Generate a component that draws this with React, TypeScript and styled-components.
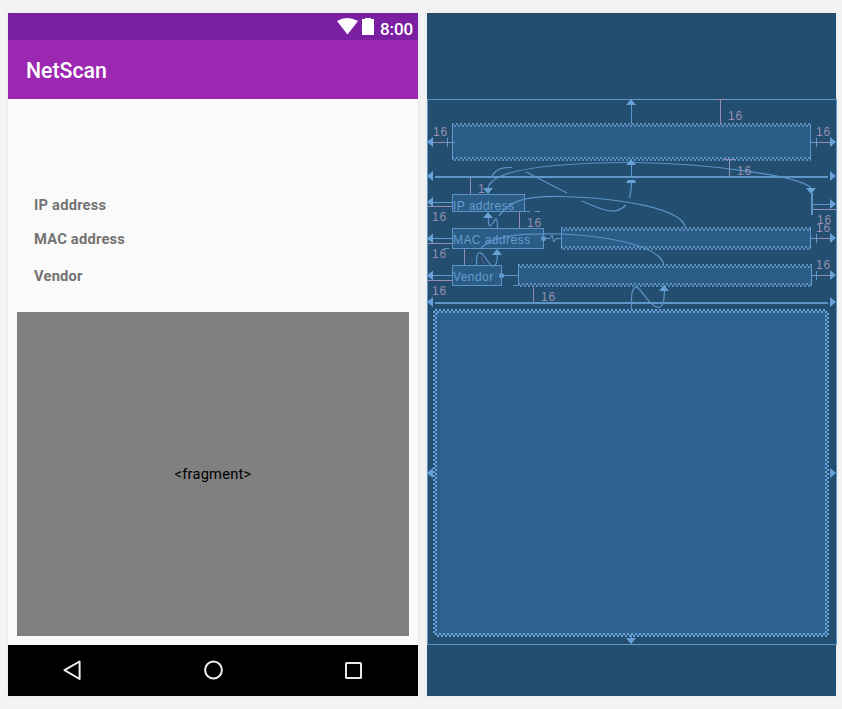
import React from "react";
import styled, { createGlobalStyle } from "styled-components";

const GlobalStyle = createGlobalStyle`
  * { box-sizing: border-box; }
  body { margin: 0; background: #f4f4f4; overflow: hidden; }
`;

const Workspace = styled.main`
  display: flex;
  gap: 9px;
  width: 842px;
  height: 709px;
  padding: 13px 0 0 8px;
  font-family: Roboto, sans-serif;
`;

const Device = styled.section`
  display: flex;
  flex-direction: column;
  width: 410px;
  height: 683px;
  background: #fafafa;
  box-shadow: 0 0 5px 1px #ebebeb;
`;

const StatusBar = styled.header`
  display: flex;
  justify-content: flex-end;
  height: 27px;
  padding: 5px 5px 0 0;
  background: #7b1fa2;
  color: #fff;
`;

const Clock = styled.time`
  width: 33px;
  margin-left: 6px;
  font-size: 17px;
  font-weight: 500;
  line-height: 22px;
  white-space: nowrap;
  letter-spacing: -0.1px;
`;

const Toolbar = styled.div`
  display: flex;
  align-items: center;
  height: 59px;
  padding: 2px 0 0 18px;
  background: #9c27b0;
  color: #fff;
`;

const Title = styled.h1`
  margin: 0;
  font-size: 21.3px;
  font-weight: 500;
`;

const Content = styled.div`
  display: flex;
  flex-direction: column;
  height: 546px;
  padding: 77px 9px 9px;
`;

const Details = styled.dl`
  display: flex;
  flex-direction: column;
  height: 127px;
  margin: 0 0 9px;
  padding: 17px 0 0 17px;
  border-top: 1px solid #f5f5f5;
  border-bottom: 1px solid #f5f5f5;
`;

const Field = styled.dt<{ $space: number }>`
  height: ${(p) => p.$space}px;
  color: #737373;
  font-size: 14.7px;
  font-weight: 700;
  line-height: 22px;
  letter-spacing: 0.22px;
`;

const Fragment = styled.div`
  display: flex;
  align-items: center;
  justify-content: center;
  height: 324px;
  background: #808080;
  color: #000;
  font-size: 14.7px;
  letter-spacing: 0.2px;
`;

const NavBar = styled.nav`
  display: flex;
  align-items: center;
  justify-content: space-between;
  height: 51px;
  padding: 0 55px 2px 54px;
  background: #000;
`;

const Blueprint = styled.section`
  position: relative;
  width: 409px;
  height: 683px;
  background: #234e6f;
  box-shadow: 0 0 5px 1px #ebebeb;
`;

const ScreenFrame = styled.div`
  position: absolute;
  top: 86px;
  left: 0;
  width: 410px;
  height: 546px;
  border: 1px solid #5f97ca;
`;

type Box = { x: number; y: number; w: number; h: number };

const Widget = styled.div<{ $box: Box; $fill: string; $outlined?: boolean }>`
  position: absolute;
  left: ${(p) => p.$box.x - 427}px;
  top: ${(p) => p.$box.y - 13}px;
  width: ${(p) => p.$box.w}px;
  height: ${(p) => p.$box.h}px;
  background: ${(p) => p.$fill};
  border: ${(p) => (p.$outlined ? "1px solid #5c94c8" : "0")};
  color: #669dce;
  font: 12px/22px "Liberation Sans", sans-serif;
  letter-spacing: 0.42px;
  white-space: nowrap;
`;

const Overlay = styled.svg`
  position: absolute;
  top: 0;
  left: 0;
  overflow: visible;
`;

const Margin = styled.span<{ $x: number; $y: number }>`
  position: absolute;
  left: ${(p) => p.$x - 427}px;
  top: ${(p) => p.$y - 10}px;
  color: #968eb0;
  font: 12px/8px "Liberation Sans", sans-serif;
  letter-spacing: 0.8px;
`;

const fixed = [
  { box: { x: 452, y: 194, w: 73, h: 18 }, label: "IP address" },
  { box: { x: 452, y: 228, w: 92, h: 21 }, label: "MAC address" },
  { box: { x: 452, y: 265, w: 50, h: 21 }, label: "Vendor" },
];

const stretched: Box[] = [
  { x: 452, y: 125, w: 359, h: 34 },
  { x: 561, y: 229, w: 250, h: 19 },
  { x: 518, y: 266, w: 294, h: 19 },
];

const fragmentBox: Box = { x: 435, y: 311, w: 392, h: 324 };

const margins: [string, number, number][] = [
  ["16", 433, 125], ["16", 816, 125], ["16", 728, 109], ["16", 737, 164],
  ["1", 478, 182], ["16", 432, 210], ["16", 527, 216], ["16", 817, 213],
  ["16", 816, 221], ["16", 432, 247], ["16", 816, 258], ["16", 432, 284],
  ["16", 541, 290],
];

type Dir = "left" | "right" | "up" | "down";
const heads: Record<Dir, string> = {
  left: "l6 -5v10z",
  right: "l-6 -5v10z",
  up: "l5 6h-10z",
  down: "l-5 -6h10z",
};

const arrows: [Dir, number, number][] = [
  ["left", 427, 142], ["left", 427, 176], ["left", 427, 202], ["left", 427, 238.5],
  ["left", 427, 275.5], ["left", 427, 302], ["left", 427, 473],
  ["right", 836, 142], ["right", 836, 176], ["right", 836, 204], ["right", 836, 238],
  ["right", 836, 275], ["right", 836, 302], ["right", 836, 473],
  ["up", 631, 99], ["up", 631, 159], ["up", 488, 212], ["up", 497, 249], ["up", 664, 285],
  ["down", 488, 194], ["down", 811, 194], ["down", 631, 644],
];

const links = [
  "M488 188C491 173 533 163 631 162.5C714 163 801 177 811 188",
  "M492 177C494 171 499 167 512 167.5M526 172L567 193M582 201C600 209 606 211 613 211C619 211 623 208 626 205M631.5 183C631.5 190 630.5 194 629.5 198",
  "M499 216C507 204 518 196 560 196.5C627 198 682 210 685 227",
  "M480 249C491 237 512 233 560 234C613 236 660 247 664 265",
  "M488.5 217C488 224 489 229 493 223C498 214 497 222 497.5 228",
  "M476.5 265C476 248 481 251 487 260C492 268 497 270 497.5 254",
  "M631.5 311V302C631 292 634 282 640 290C646 297 652 307 659 307.5C664 306 664 299 664.5 291",
];

const blueLines =
  "M433 202.5H452M433 238.5H452M433 275.5H452M447 142.5H455M811 142.5H817M811 238.5H817M812 275.5H817" +
  "M447.5 138V147M816.5 138V147M816.5 234V243M816.5 271V280M812 204.5H830" +
  "M631.5 105V124M631.5 165V176M631.5 635V638M544 238.5H550L552 235L554 242L556 238.5H561M502 275.5H518" +
  "M452.5 124V160M810.5 124V160M561.5 227V249M810.5 228V249M518.5 264V286M811.5 265V286" +
  "M525 211.5H530M535 211.5H540M513 285.5H518M444 248.5H449";

const marginLines =
  "M433 142.5H447M817 142.5H830M817 238.5H830M817 275.5H830M427 206.5H452M427 243.5H452M427 280.5H452M812 209.5H836" +
  "M720.5 99V125M715 99.5H726M729.5 160V176M724 159.5H735M470.5 178V194M519.5 212V228M464.5 249V265M533.5 286V302";

type WaveProps = { x: number; y: number; length: number; paint: string; vertical?: boolean };

function Wave({ x, y, length, paint, vertical }: WaveProps) {
  return (
    <rect
      transform={`translate(${x} ${y})`}
      width={vertical ? 4 : length}
      height={vertical ? length : 4}
      fill={`url(#${paint})`}
    />
  );
}

function WavePattern({ id, color }: { id: string; color: string }) {
  return (
    <pattern id={id} width="4" height="4" patternUnits="userSpaceOnUse">
      <path d="M0 0h2v2H0zM2 2h2v2H2z" fill={color} />
    </pattern>
  );
}

function Constraints() {
  return (
    <Overlay width="409" height="683" viewBox="427 13 409 683" aria-hidden="true">
      <defs>
        <WavePattern id="wave-soft" color="#5a8fc0" />
        <WavePattern id="wave-bright" color="#6ba5dc" />
      </defs>
      {stretched.map(({ x, y, w, h }) => (
        <g key={y}>
          <Wave x={x} y={y - 2} length={w} paint="wave-soft" />
          <Wave x={x} y={y + h - 2} length={w} paint="wave-soft" />
        </g>
      ))}
      <Wave x={435} y={309} length={392} paint="wave-bright" />
      <Wave x={435} y={633} length={392} paint="wave-bright" />
      <Wave x={433} y={311} length={324} paint="wave-bright" vertical />
      <Wave x={825} y={311} length={324} paint="wave-bright" vertical />
      <path d={marginLines} stroke="#968eb0" fill="none" />
      <path d={blueLines} stroke="#5f99cf" fill="none" />
      <path d="M435 177H828M435 303H828M812 193V215" stroke="#5f97ca" strokeWidth="2" />
      {links.map((d) => (
        <path key={d} d={d} stroke="#5c94c8" strokeWidth="1.25" fill="none" />
      ))}
      <path d="M628 180h7l1 3h-10z" fill="#67a1d8" />
      <path d="M472 259v2M482 256v4q0 3 3 3" stroke="#625f8c" fill="none" />
      <circle cx="543.5" cy="238.5" r="2.6" fill="#5c98d0" />
      <circle cx="501.5" cy="275.5" r="2.6" fill="#5c98d0" />
      {arrows.map(([dir, x, y]) => (
        <path key={`${dir}-${x}-${y}`} d={`M${x} ${y}${heads[dir]}`} fill="#67a1d8" />
      ))}
    </Overlay>
  );
}

export default function App() {
  return (
    <>
      <GlobalStyle />
      <Workspace>
        <Device>
          <StatusBar>
            <svg width="21" height="17" viewBox="0 0 21 17">
              <path d="M0 3Q10-3 21 3L10.5 16.5Z" fill="#fff" />
            </svg>
            <svg width="16" height="18" viewBox="0 0 16 18">
              <path d="M4 1h3V0h6v1h3v16H4z" fill="#fff" />
            </svg>
            <Clock>8:00</Clock>
          </StatusBar>
          <Toolbar>
            <Title>NetScan</Title>
          </Toolbar>
          <Content>
            <Details>
              <Field $space={34}>IP address</Field>
              <Field $space={37}>MAC address</Field>
              <Field $space={22}>Vendor</Field>
            </Details>
            <Fragment>&lt;fragment&gt;</Fragment>
          </Content>
          <NavBar>
            <svg width="20" height="22" viewBox="0 0 20 22">
              <path d="M2.5 11.2L17.6 2.5V20Z" fill="none" stroke="#eee" strokeWidth="2" strokeLinejoin="round" />
            </svg>
            <svg width="20" height="20" viewBox="0 0 20 20">
              <circle cx="10.5" cy="10" r="8.4" fill="none" stroke="#eee" strokeWidth="2" />
            </svg>
            <svg width="20" height="20" viewBox="0 0 20 20">
              <rect x="3" y="3" width="15" height="15" rx=".5" fill="none" stroke="#e8e8e8" strokeWidth="2" />
            </svg>
          </NavBar>
        </Device>
        <Blueprint>
          <ScreenFrame />
          {stretched.map((box) => (
            <Widget key={box.y} $box={box} $fill="#2b5c86" />
          ))}
          {fixed.map(({ box, label }) => (
            <Widget key={label} $box={box} $fill="#2b5c86" $outlined>
              {label}
            </Widget>
          ))}
          <Widget $box={fragmentBox} $fill="#2e628e" />
          <Constraints />
          {margins.map(([label, x, y]) => (
            <Margin key={`${x}-${y}`} $x={x} $y={y}>
              {label}
            </Margin>
          ))}
        </Blueprint>
      </Workspace>
    </>
  );
}
